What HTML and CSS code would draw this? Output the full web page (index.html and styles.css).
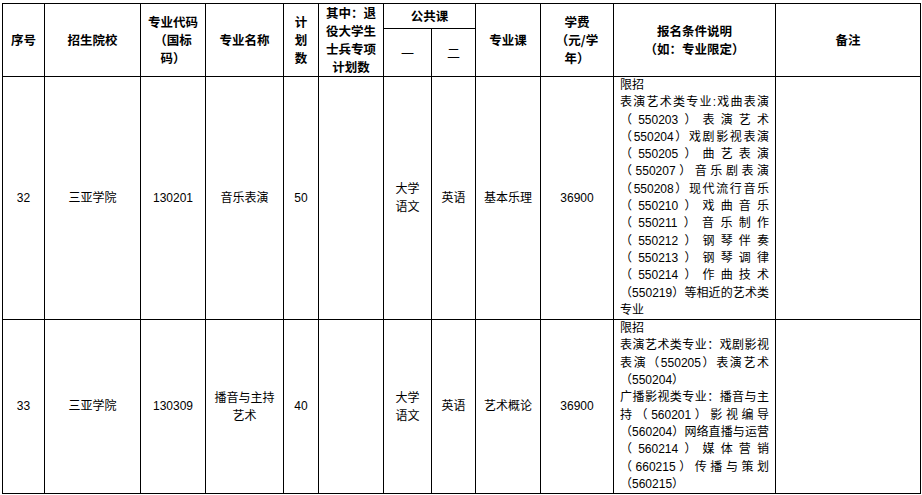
FILE: index.html
```html
<!DOCTYPE html>
<html lang="zh-CN">
<head>
<meta charset="utf-8">
<title>招生计划</title>
<link rel="stylesheet" href="styles.css">
</head>
<body>
<table class="plan">
  <colgroup>
    <col class="c-no">
    <col class="c-school">
    <col class="c-code">
    <col class="c-name">
    <col class="c-num">
    <col class="c-vet">
    <col class="c-p1">
    <col class="c-p2">
    <col class="c-major">
    <col class="c-fee">
    <col class="c-cond">
    <col class="c-note">
  </colgroup>
  <thead>
    <tr class="h1">
      <th rowspan="2">序号</th>
      <th rowspan="2">招生院校</th>
      <th rowspan="2">专业代码<br>（国标<br>码）</th>
      <th rowspan="2">专业名称</th>
      <th rowspan="2">计<br>划<br>数</th>
      <th rowspan="2" class="vet">其中：退<br>役大学生<br>士兵专项<br>计划数</th>
      <th colspan="2">公共课</th>
      <th rowspan="2">专业课</th>
      <th rowspan="2">学费<br>（元/学<br>年）</th>
      <th rowspan="2">报名条件说明<br>（如：专业限定）</th>
      <th rowspan="2">备注</th>
    </tr>
    <tr class="h2">
      <th class="thin">一</th>
      <th class="thin">二</th>
    </tr>
  </thead>
  <tbody>
    <tr class="r1">
      <td>32</td>
      <td>三亚学院</td>
      <td>130201</td>
      <td>音乐表演</td>
      <td>50</td>
      <td></td>
      <td class="two">大学<br>语文</td>
      <td>英语</td>
      <td>基本乐理</td>
      <td>36900</td>
      <td class="cond">
        <div>限招</div>
        <div class="j">表演艺术类专业:戏曲表演</div>
        <div class="j">（550203）表演艺术</div>
        <div class="j">（550204）戏剧影视表演</div>
        <div class="j">（550205）曲艺表演</div>
        <div class="j">（550207）音乐剧表演</div>
        <div class="j">（550208）现代流行音乐</div>
        <div class="j">（550210）戏曲音乐</div>
        <div class="j">（550211）音乐制作</div>
        <div class="j">（550212）钢琴伴奏</div>
        <div class="j">（550213）钢琴调律</div>
        <div class="j">（550214）作曲技术</div>
        <div class="j">（550219）等相近的艺术类</div>
        <div>专业</div>
      </td>
      <td></td>
    </tr>
    <tr class="r2">
      <td>33</td>
      <td>三亚学院</td>
      <td>130309</td>
      <td class="two">播音与主持<br>艺术</td>
      <td>40</td>
      <td></td>
      <td class="two">大学<br>语文</td>
      <td>英语</td>
      <td>艺术概论</td>
      <td>36900</td>
      <td class="cond">
        <div>限招</div>
        <div class="j">表演艺术类专业：戏剧影视</div>
        <div class="j">表演（550205）表演艺术</div>
        <div>（550204）</div>
        <div class="j">广播影视类专业：播音与主</div>
        <div class="j">持（560201）影视编导</div>
        <div class="j">（560204）网络直播与运营</div>
        <div class="j">（560214）媒体营销</div>
        <div class="j">（660215）传播与策划</div>
        <div>（560215）</div>
      </td>
      <td></td>
    </tr>
  </tbody>
</table>
</body>
</html>
```

FILE: styles.css
```css
html, body {
  margin: 0;
  padding: 0;
  background: #ffffff;
}

body {
  padding: 3px 0 0 2px;
  font-family: "Liberation Sans", "Noto Sans CJK SC", sans-serif;
  font-size: 12px;
  color: #000000;
}

.plan {
  border-collapse: collapse;
  table-layout: fixed;
  width: 918px;
}

.plan th,
.plan td {
  border: 1px solid #000000;
  padding: 0 2px;
  text-align: center;
  vertical-align: middle;
  overflow: hidden;
}

.c-no { width: 42px; }
.c-school { width: 96px; }
.c-code { width: 65px; }
.c-name { width: 78px; }
.c-num { width: 35px; }
.c-vet { width: 65px; }
.c-p1 { width: 48px; }
.c-p2 { width: 44px; }
.c-major { width: 65px; }
.c-fee { width: 73px; }
.c-cond { width: 162px; }
.c-note { width: 145px; }

.plan th {
  font-family: "Noto Sans CJK SC", sans-serif;
  font-weight: bold;
  font-size: 12.5px;
  line-height: 18px;
}

.plan th.thin {
  font-weight: normal;
  font-size: 13px;
}

.h1 { height: 25px; }
.h2 { height: 48px; }
.r1 { height: 243px; }
.r2 { height: 172px; }

.plan td {
  line-height: 17px;
}

.plan td.two {
  line-height: 18px;
}

.plan td.cond {
  text-align: left;
  padding: 0 6px 0 6px;
  line-height: 17.3px;
  vertical-align: top;
}

.cond .j {
  text-align: justify;
  text-align-last: justify;
  text-justify: inter-character;
}
```
